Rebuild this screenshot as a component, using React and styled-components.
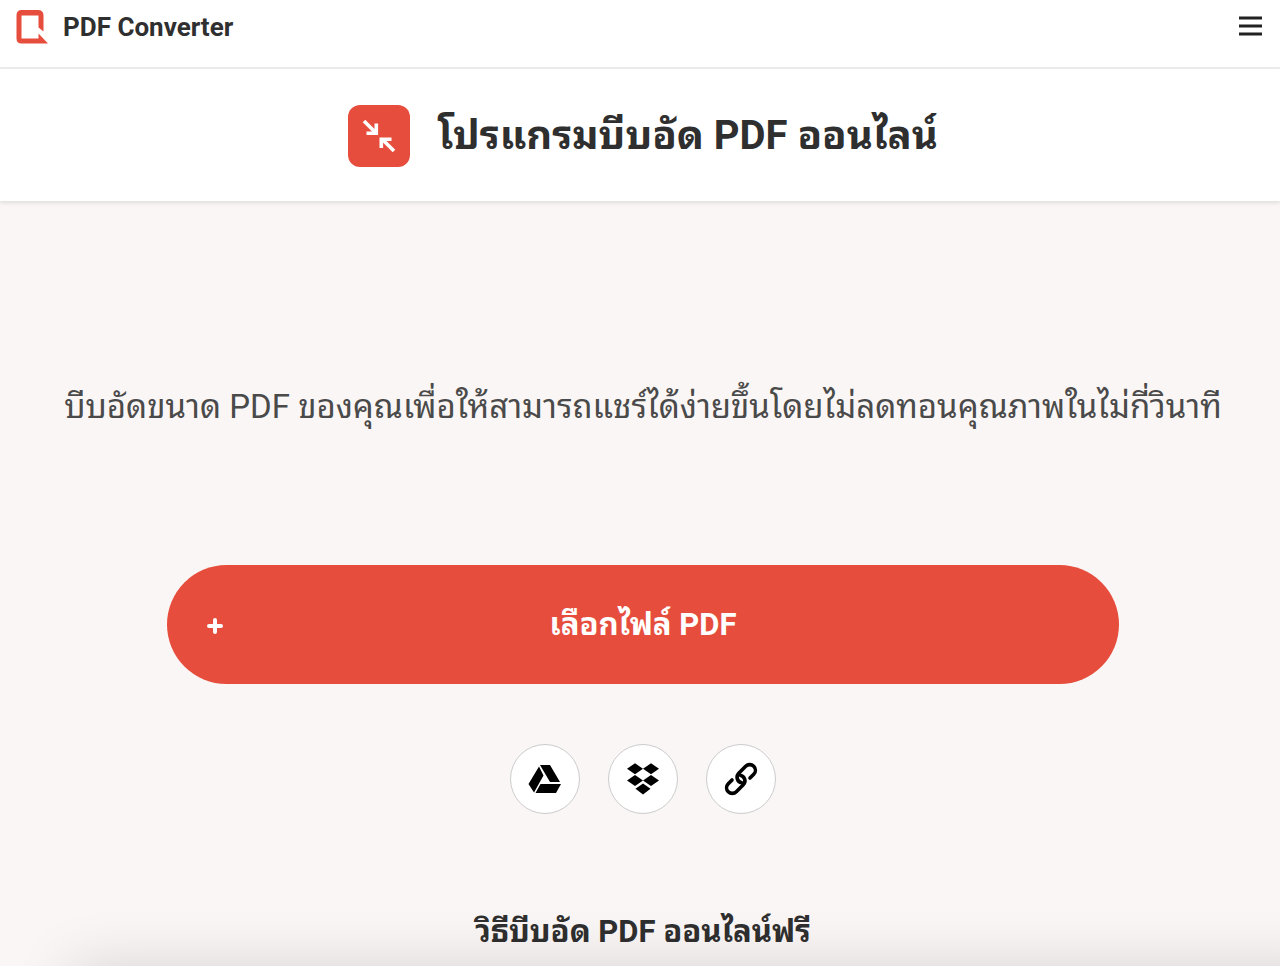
import styled, { createGlobalStyle } from "styled-components";

const GlobalStyle = createGlobalStyle`
  * {
    box-sizing: border-box;
  }

  body {
    margin: 0;
    background-color: #faf6f5;
    color: #2f2f2f;
    font-family: Roboto, "Noto Sans Thai Looped", "Noto Looped Thai", Loma, Garuda, Waree, "Noto Sans Thai", "Noto Sans", sans-serif;
    overflow-x: hidden;
  }
`;

const Header = styled.header`
  display: flex;
  align-items: flex-start;
  justify-content: space-between;
  height: 69px;
  padding: 8px 16px;
  background-color: #fff;
  border-bottom: 2px solid #ececec;
`;

const Brand = styled.a`
  display: flex;
  align-items: center;
  gap: 14px;
  height: 37px;
  color: inherit;
  font-family: Roboto, sans-serif;
  font-size: 26px;
  font-weight: 700;
  text-decoration: none;
`;

const MenuButton = styled.button`
  display: flex;
  padding: 6px 0;
  border: 0;
  background: none;
  color: #222;
  cursor: pointer;
`;

const TitleBar = styled.div`
  display: flex;
  align-items: center;
  justify-content: center;
  gap: 28px;
  height: 132px;
  padding: 2px 16px 0 22px;
  background-color: #fff;
  box-shadow: 0 2px 4px rgba(0, 0, 0, 0.1);
`;

const ToolIcon = styled.span`
  display: flex;
  flex: none;
  width: 62px;
  height: 62px;
  border-radius: 12px;
  background-color: #e64d3d;
`;

const Title = styled.h1`
  margin: 0;
  font-size: 40px;
  line-height: 60px;
`;

const Main = styled.main`
  display: flex;
  flex-direction: column;
  align-items: center;
  padding: 182px 16px 0 22px;
`;

const Lead = styled.p`
  margin: 0;
  color: #4a4a4a;
  font-size: 33px;
  line-height: 48px;
  text-align: center;
`;

const UploadButton = styled.button`
  display: grid;
  grid-template-columns: 56px 1fr 56px;
  align-items: center;
  width: 100%;
  max-width: 952px;
  margin-top: 134px;
  padding: 36px 20px;
  border: 0;
  border-radius: 60px;
  background-color: #e64d3d;
  color: #fff;
  font-family: inherit;
  font-size: 31px;
  font-weight: 700;
  line-height: 47px;
  cursor: pointer;

  svg {
    justify-self: center;
  }
`;

const Sources = styled.div`
  display: flex;
  gap: 28px;
  margin-top: 60px;
`;

const SourceButton = styled.button`
  display: flex;
  align-items: center;
  justify-content: center;
  width: 70px;
  height: 70px;
  padding: 0;
  border: 1px solid #ccc;
  border-radius: 50%;
  background-color: #fff;
  color: #000;
  cursor: pointer;
`;

const SectionTitle = styled.h2`
  margin: 95px 0 0;
  font-size: 31px;
  line-height: 46px;
`;

// top edge of the sheet docked under the page, only its shadow shows
const SheetShadow = styled.div`
  position: fixed;
  top: 100%;
  right: -60px;
  left: 70px;
  height: 80px;
  box-shadow: 0 0 60px rgba(0, 0, 0, 0.14);
  pointer-events: none;
`;

const LogoIcon = () => (
  <svg width="33" height="35" viewBox="0 0 33 35" aria-hidden="true">
    <path
      fill="#e64d3d"
      d="M5.500 1H22q5.500 0 5.500 5.500V22.500L22.500 18.500V6.500H5.500V29.500H22.500V24.500L32 34.500H5.500Q.5 34.500.5 29.500V6.500Q.5 1 5.500 1z"
    />
  </svg>
);

const MenuIcon = () => (
  <svg width="26" height="24" viewBox="0 0 26 24" aria-hidden="true">
    <path stroke="currentColor" strokeWidth="3" d="M1 4h23M1 12h23M1 20h23" />
  </svg>
);

const CompressIcon = () => (
  <svg width="62" height="62" viewBox="0 0 62 62" aria-hidden="true">
    <path
      fill="none"
      stroke="#fff"
      strokeWidth="3.600"
      d="M16 16L27.500 27.500M18.500 28.300H28.300V18.500M46 46L34 34M33.300 43V34.200H43.500"
    />
  </svg>
);

const PlusIcon = () => (
  <svg width="16" height="18" viewBox="0 0 16 18" aria-hidden="true">
    <path
      stroke="currentColor"
      strokeWidth="4"
      strokeLinecap="round"
      d="M2 10h12M8 4v12"
    />
  </svg>
);

const DriveIcon = () => (
  <svg width="34" height="30" viewBox="0 0 34 30" aria-hidden="true">
    <path
      fill="currentColor"
      d="M12 1H22L32 18H22zM11 2.500L15.500 11.500L6 28.500L.5 20zM12.500 20H33L28 29H7.500z"
    />
  </svg>
);

const DropboxIcon = () => (
  <svg width="32" height="32" viewBox="0 0 32 32" aria-hidden="true">
    <path
      fill="currentColor"
      d="M8 .3l8 5.500-8 5.500L0 5.800zM24 .3l8 5.500-8 5.500-8-5.500zM8 12l8 5.500L8 23 0 17.500zM24 12l8 5.500-8 5.500-8-5.500zM16 20.500l7.500 5.250L16 31.500l-7.500-5.750z"
    />
  </svg>
);

const LinkIcon = () => (
  <svg width="36" height="36" viewBox="-18 -18 36 36" aria-hidden="true">
    <g
      fill="none"
      stroke="currentColor"
      strokeWidth="3.600"
      strokeLinecap="round"
      transform="rotate(-45)"
    >
      <path d="M7 5.700H12.300A5.700 5.700 0 0 0 12.300 -5.700H2.500A5.700 5.700 0 0 0 -2.200 3.200" />
      <path d="M-7 -5.700H-12.300A5.700 5.700 0 0 0 -12.300 5.700H-2.500A5.700 5.700 0 0 0 2.200 -3.200" />
    </g>
  </svg>
);

const sources = [
  { label: "Google Drive", Icon: DriveIcon },
  { label: "Dropbox", Icon: DropboxIcon },
  { label: "URL", Icon: LinkIcon },
];

const App = () => {
  return (
    <>
      <GlobalStyle />
      <Header>
        <Brand href="#">
          <LogoIcon />
          PDF Converter
        </Brand>
        <MenuButton type="button" aria-label="Menu">
          <MenuIcon />
        </MenuButton>
      </Header>
      <TitleBar>
        <ToolIcon>
          <CompressIcon />
        </ToolIcon>
        <Title>โปรแกรมบีบอัด PDF ออนไลน์</Title>
      </TitleBar>
      <Main>
        <Lead>
          บีบอัดขนาด PDF ของคุณเพื่อให้สามารถแชร์ได้ง่ายขึ้นโดยไม่ลดทอนคุณภาพในไม่กี่วินาที
        </Lead>
        <UploadButton type="button">
          <PlusIcon />
          <span>เลือกไฟล์ PDF</span>
        </UploadButton>
        <Sources>
          {sources.map(({ label, Icon }) => (
            <SourceButton key={label} type="button" aria-label={label}>
              <Icon />
            </SourceButton>
          ))}
        </Sources>
        <SectionTitle>วิธีบีบอัด PDF ออนไลน์ฟรี</SectionTitle>
      </Main>
      <SheetShadow />
    </>
  );
};

export default App;
